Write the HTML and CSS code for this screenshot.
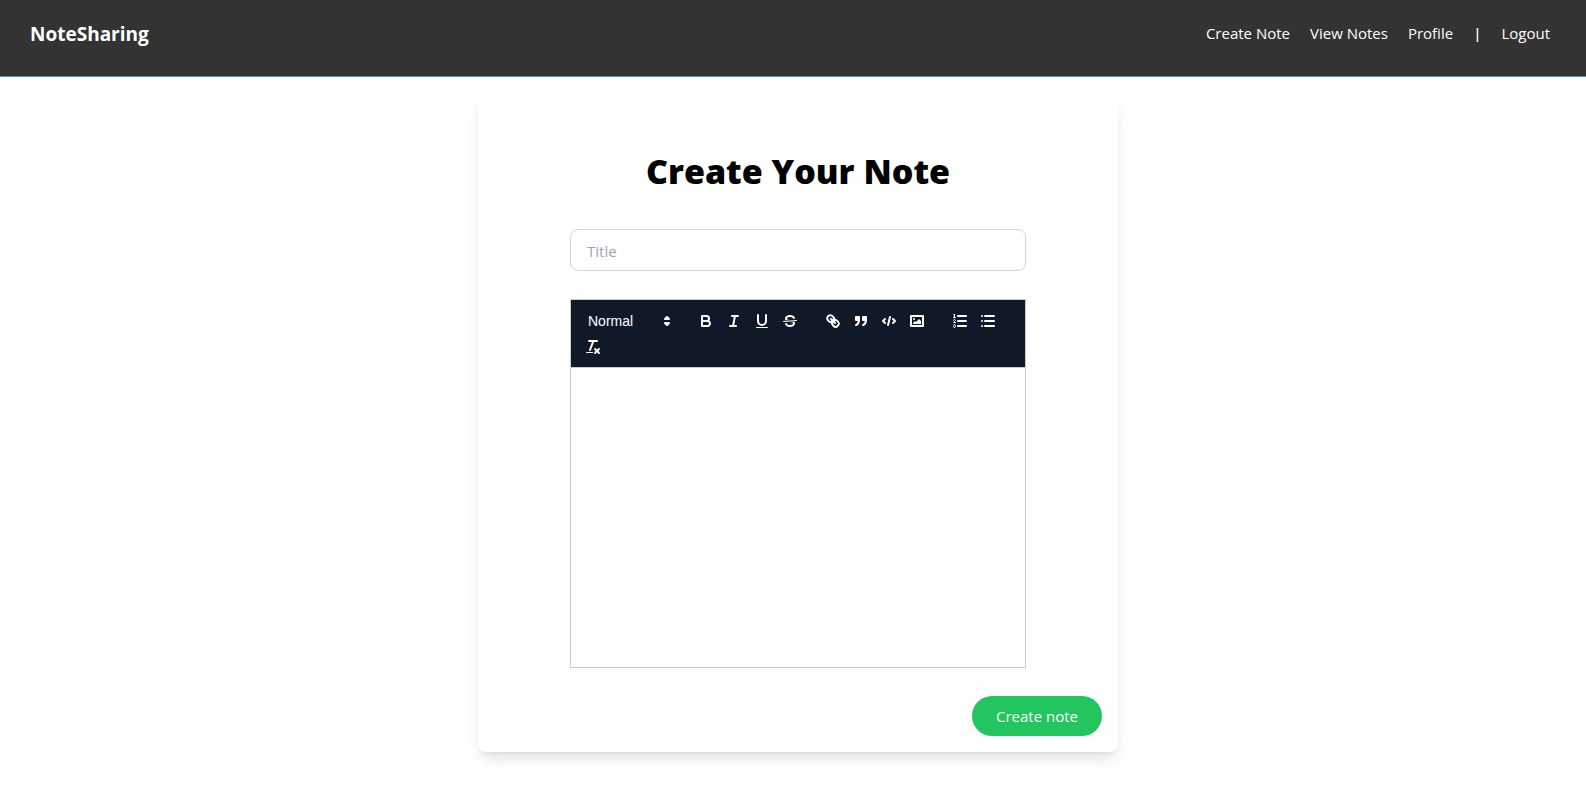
FILE: index.html
```html
<!DOCTYPE html>
<html lang="en">
<head>
<meta charset="utf-8">
<meta name="viewport" content="width=device-width, initial-scale=1">
<title>NoteSharing</title>
<link rel="stylesheet" href="styles.css">
</head>
<body>
<header class="site-header">
  <a class="brand" href="#">NoteSharing</a>
  <nav class="site-nav">
    <a href="#">Create Note</a>
    <a href="#">View Notes</a>
    <a href="#">Profile</a>
    <span class="divider">|</span>
    <a href="#">Logout</a>
  </nav>
</header>
<main class="page">
  <form class="card">
    <h1 class="heading">Create Your Note</h1>
    <input class="title-input" type="text" placeholder="Title" aria-label="Title">
    <div class="editor">
      <div class="toolbar" role="toolbar" aria-label="Formatting">
        <div class="group picker">
          <select class="picker-select" aria-label="Text style"><option>Normal</option><option>Heading 1</option><option>Heading 2</option></select>
          <svg class="picker-arrows" viewBox="0 0 18 18"><polygon class="both" points="7 11 9 13 11 11 7 11"/><polygon class="both" points="7 7 9 5 11 7 7 7"/></svg>
        </div>
        <div class="group">
          <button type="button" class="tool" aria-label="Bold"><svg viewBox="0 0 18 18"><path class="line" d="M5,4H9.5A2.5,2.5,0,0,1,12,6.5v0A2.5,2.5,0,0,1,9.5,9H5A0,0,0,0,1,5,9V4A0,0,0,0,1,5,4Z"/><path class="line" d="M5,9h5.5A2.5,2.5,0,0,1,13,11.5v0A2.5,2.5,0,0,1,10.5,14H5a0,0,0,0,1,0,0V9A0,0,0,0,1,5,9Z"/></svg></button>
          <button type="button" class="tool" aria-label="Italic"><svg viewBox="0 0 18 18"><line class="line" x1="7" x2="13" y1="4" y2="4"/><line class="line" x1="5" x2="11" y1="14" y2="14"/><line class="line" x1="8" x2="10" y1="14" y2="4"/></svg></button>
          <button type="button" class="tool" aria-label="Underline"><svg viewBox="0 0 18 18"><path class="line" d="M5,3V9a4.012,4.012,0,0,0,4,4H9a4.012,4.012,0,0,0,4-4V3"/><rect class="fill" height="1" rx="0.5" ry="0.5" width="12" x="3" y="15"/></svg></button>
          <button type="button" class="tool" aria-label="Strikethrough"><svg viewBox="0 0 18 18"><line class="line thin" x1="15.5" x2="2.5" y1="8.5" y2="9.5"/><path class="fill" d="M9.007,8C6.542,7.791,6,7.519,6,6.5,6,5.792,7.283,5,9,5c1.571,0,2.765.679,2.969,1.309a1,1,0,0,0,1.9-.617C13.356,4.106,11.354,3,9,3,6.2,3,4,4.538,4,6.5a3.2,3.2,0,0,0,.5,1.843Z"/><path class="fill" d="M8.984,10C11.457,10.208,12,10.479,12,11.5c0,0.708-1.283,1.5-3,1.5-1.571,0-2.765-.679-2.969-1.309a1,1,0,1,0-1.9.617C4.644,13.894,6.646,15,9,15c2.8,0,5-1.538,5-3.5a3.2,3.2,0,0,0-.5-1.843Z"/></svg></button>
        </div>
        <div class="group">
          <button type="button" class="tool" aria-label="Link"><svg viewBox="0 0 18 18"><line class="line" x1="7" x2="11" y1="7" y2="11"/><path class="both" d="M8.9,4.577a3.476,3.476,0,0,1,.36,4.679A3.476,3.476,0,0,1,4.577,8.9C3.185,7.5,2.035,6.4,4.217,4.217S7.5,3.185,8.9,4.577Z" fill-opacity="0"/><path class="both" d="M13.423,9.1a3.476,3.476,0,0,0-4.679-.36,3.476,3.476,0,0,0,.36,4.679c1.392,1.392,2.5,2.542,4.679.36S14.815,10.5,13.423,9.1Z" fill-opacity="0"/></svg></button>
          <button type="button" class="tool" aria-label="Quote"><svg viewBox="0 0 18 18"><rect class="both" height="3" width="3" x="4" y="5"/><rect class="both" height="3" width="3" x="11" y="5"/><path class="both" d="M7,8c0,4.031-3,5-3,5"/><path class="both" d="M14,8c0,4.031-3,5-3,5"/></svg></button>
          <button type="button" class="tool" aria-label="Code block"><svg viewBox="0 0 18 18"><polyline class="line" points="5 7 3 9 5 11"/><polyline class="line" points="13 7 15 9 13 11"/><line class="line" x1="10" x2="8" y1="5" y2="13"/></svg></button>
          <button type="button" class="tool" aria-label="Image"><svg viewBox="0 0 18 18"><rect class="line" height="10" width="12" x="3" y="4"/><circle class="fill" cx="6" cy="7" r="1"/><polyline class="fill" points="5 12 5 11 7 9 8 10 11 7 13 9 13 12 5 12"/></svg></button>
        </div>
        <div class="group">
          <button type="button" class="tool" aria-label="Numbered list"><svg viewBox="0 0 18 18"><line class="line" x1="7" x2="15" y1="4" y2="4"/><line class="line" x1="7" x2="15" y1="9" y2="9"/><line class="line" x1="7" x2="15" y1="14" y2="14"/><line class="line thin" x1="2.5" x2="4.5" y1="5.5" y2="5.5"/><path class="fill" d="M3.5,6A0.5,0.5,0,0,1,3,5.5V3.085l-0.276.138A0.5,0.5,0,0,1,2.053,3c-0.124-.247-0.023-0.324.224-0.447l1-.5A0.5,0.5,0,0,1,4,2.5v3A0.5,0.5,0,0,1,3.5,6Z"/><path class="line thin" d="M4.5,10.5h-2c0-.234,1.85-1.076,1.85-2.234A0.959,0.959,0,0,0,2.5,8.156"/><path class="line thin" d="M2.5,14.846a0.959,0.959,0,0,0,1.85-.109A0.7,0.7,0,0,0,3.75,14a0.688,0.688,0,0,0,.6-0.736,0.959,0.959,0,0,0-1.85-.109"/></svg></button>
          <button type="button" class="tool" aria-label="Bulleted list"><svg viewBox="0 0 18 18"><line class="line" x1="6" x2="15" y1="4" y2="4"/><line class="line" x1="6" x2="15" y1="9" y2="9"/><line class="line" x1="6" x2="15" y1="14" y2="14"/><line class="line" x1="3" x2="3" y1="4" y2="4"/><line class="line" x1="3" x2="3" y1="9" y2="9"/><line class="line" x1="3" x2="3" y1="14" y2="14"/></svg></button>
        </div>
        <div class="group">
          <button type="button" class="tool" aria-label="Clear formatting"><svg viewBox="0 0 18 18"><line class="line" x1="5" x2="13" y1="3" y2="3"/><line class="line" x1="6" x2="9.35" y1="12" y2="3"/><line class="line" x1="11" x2="15" y1="11" y2="15"/><line class="line" x1="15" x2="11" y1="11" y2="15"/><rect class="fill" height="1" rx="0.5" ry="0.5" width="7" x="2" y="14"/></svg></button>
        </div>
      </div>
      <textarea class="editor-text" aria-label="Note"></textarea>
    </div>
    <button class="submit" type="submit">Create note</button>
  </form>
</main>
</body>
</html>
```

FILE: styles.css
```css
*, *::before, *::after { box-sizing: border-box; }

body {
  margin: 0;
  background: #fff;
  color: #000;
  font: 15px/24px "Open Sans", "Noto Sans", sans-serif;
}

a { color: inherit; text-decoration: none; }

.site-header {
  display: flex;
  align-items: flex-start;
  justify-content: space-between;
  padding: 20px 36px 28px 30px;
  background: #333;
  border-bottom: 1px solid #4a90e2;
  color: #fff;
}

.brand {
  font-size: 19px;
  font-weight: 700;
  line-height: 28px;
}

.site-nav { display: flex; gap: 20px; padding-top: 1px; }

.divider { font-weight: 600; }

.page { padding: 16px 0 32px 10px; }

.card {
  display: flex;
  flex-direction: column;
  align-items: center;
  max-width: 640px;
  margin: 0 auto;
  padding: 58px 16px 16px;
  border-radius: 8px;
  background: #fff;
  box-shadow: 0 10px 15px -3px rgba(0, 0, 0, 0.1), 0 4px 6px -4px rgba(0, 0, 0, 0.1);
}

.heading {
  margin: 0;
  font-size: 34px;
  font-weight: 800;
  line-height: 40px;
}

.title-input {
  width: 75%;
  height: 42px;
  margin: 38px 0 28px;
  padding: 2px 16px 0;
  border: 1px solid #d1d5db;
  border-radius: 8px;
  background: #fff;
  font: inherit;
}

.title-input::placeholder { color: #9ca3af; opacity: 1; }

.editor { width: 75%; border: 1px solid #ccc; }

.toolbar {
  display: flex;
  flex-wrap: wrap;
  gap: 2px 15px;
  padding: 9px 8px 8px;
  border-bottom: 1px solid #ccc;
  background: #111827;
  color: #fff;
}

.group { display: flex; }

.picker { position: relative; width: 98px; }

.picker-select {
  appearance: none;
  width: 100%;
  height: 24px;
  padding: 0 0 0 9px;
  border: 0;
  background: transparent;
  color: inherit;
  font: 500 14px/24px "Liberation Sans", Arial, sans-serif;
}

.picker-arrows {
  position: absolute;
  top: 3px;
  right: 1px;
  width: 18px;
  pointer-events: none;
}

.tool {
  width: 28px;
  height: 24px;
  padding: 3px 5px;
  border: 0;
  background: none;
}

.tool svg { display: block; width: 18px; height: 18px; }

.line {
  fill: none;
  stroke: #fff;
  stroke-width: 2;
  stroke-linecap: round;
  stroke-linejoin: round;
}

.both {
  fill: #fff;
  stroke: #fff;
  stroke-width: 2;
  stroke-linecap: round;
  stroke-linejoin: round;
}

.fill { fill: #fff; }

.thin { stroke-width: 1; }

.editor-text {
  display: block;
  width: 100%;
  height: 299px;
  padding: 12px 15px;
  border: 0;
  resize: none;
  background: #fff;
  font: 13px/18px "Liberation Sans", Arial, sans-serif;
}

.submit {
  align-self: flex-end;
  margin-top: 28px;
  padding: 8px 24px;
  border: 0;
  border-radius: 20px;
  background: #22c55e;
  color: #fff;
  font: inherit;
}
```
